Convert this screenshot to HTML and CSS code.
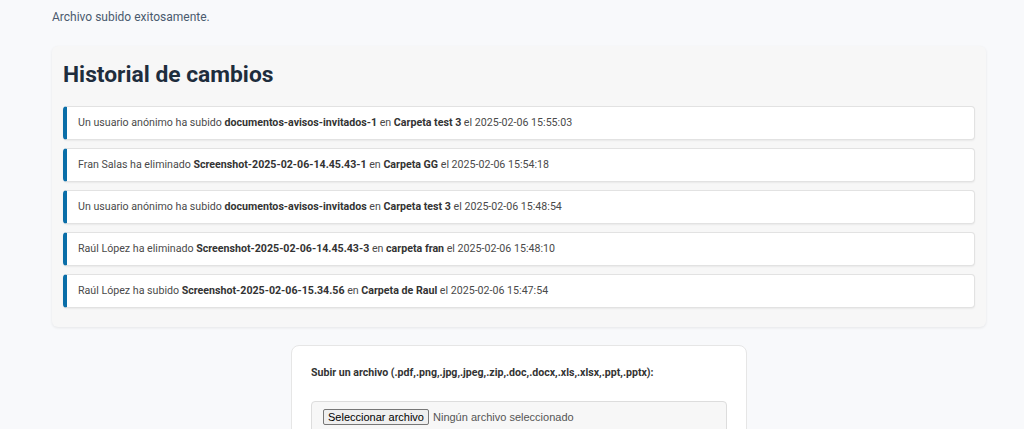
FILE: index.html
```html
<!DOCTYPE html>
<html lang="es">
<head>
    <meta charset="UTF-8">
    <title>Historial</title>
    <link rel="stylesheet" href="styles.css">
</head>
<body>
<div class="page">
    <p class="msg">Archivo subido exitosamente.</p>

    <div class="history">
        <h2>Historial de cambios</h2>
        <ul class="log">
            <li>Un usuario anónimo ha subido <b>documentos-avisos-invitados-1</b> en <b>Carpeta test 3</b> el 2025-02-06 15:55:03</li>
            <li>Fran Salas ha eliminado <b>Screenshot-2025-02-06-14.45.43-1</b> en <b>Carpeta GG</b> el 2025-02-06 15:54:18</li>
            <li>Un usuario anónimo ha subido <b>documentos-avisos-invitados</b> en <b>Carpeta test 3</b> el 2025-02-06 15:48:54</li>
            <li>Raúl López ha eliminado <b>Screenshot-2025-02-06-14.45.43-3</b> en <b>carpeta fran</b> el 2025-02-06 15:48:10</li>
            <li>Raúl López ha subido <b>Screenshot-2025-02-06-15.34.56</b> en <b>Carpeta de Raul</b> el 2025-02-06 15:47:54</li>
        </ul>
    </div>

    <form class="upload">
        <label for="file">Subir un archivo (.pdf,.png,.jpg,.jpeg,.zip,.doc,.docx,.xls,.xlsx,.ppt,.pptx):</label>
        <div class="file-box">
            <span class="file-btn">Seleccionar archivo</span>
            <span class="file-name">Ningún archivo seleccionado</span>
        </div>
    </form>
</div>
</body>
</html>
```

FILE: styles.css
```css
* {
    margin: 0;
    padding: 0;
    box-sizing: border-box;
}

body {
    background: #f8f9fb;
    font-family: Roboto, "Liberation Sans", sans-serif;
    color: #333;
}

.page {
    padding: 9px 38px 0 52px;
}

.msg {
    font-size: 12px;
    color: #4a5a6e;
    line-height: 16px;
}

.history {
    margin-top: 21px;
    background: #f7f7f7;
    border-radius: 6px;
    box-shadow: 0 1px 3px rgba(0, 0, 0, 0.08);
    padding: 15px 11px 19px 11px;
}

.history h2 {
    font-size: 22.8px;
    font-weight: 700;
    color: #1e2d3d;
    line-height: 28px;
    margin-bottom: 17px;
}

.log {
    list-style: none;
    display: flex;
    flex-direction: column;
    gap: 8px;
}

.log li {
    background: #fff;
    border: 1px solid #e2e2e2;
    border-left: 4px solid #0a6ea8;
    border-radius: 4px;
    box-shadow: 0 1px 2px rgba(0, 0, 0, 0.06);
    font-size: 10.65px;
    color: #4a4a4a;
    line-height: 14px;
    padding: 9px 11px 9px 11px;
}

.log li b {
    color: #333;
}

.upload {
    width: 456px;
    margin: 18px auto 0;
    background: #fff;
    border: 1px solid #e6e6e6;
    border-radius: 8px;
    padding: 20px 19px 20px;
}

.upload label {
    display: block;
    font-size: 10.6px;
    font-weight: 700;
    color: #333;
    line-height: 14px;
    margin-bottom: 21px;
}

.file-box {
    background: #f7f7f7;
    border: 1px solid #ddd;
    border-radius: 4px;
    padding: 7px 11px;
    display: flex;
    align-items: center;
    gap: 4px;
    font-family: "Liberation Sans", Arial, sans-serif;
    font-size: 11px;
}

.file-btn {
    background: #efefef;
    border: 1px solid #777;
    border-radius: 2px;
    padding: 1px 4px;
    color: #000;
}

.file-name {
    color: #555;
}
```
